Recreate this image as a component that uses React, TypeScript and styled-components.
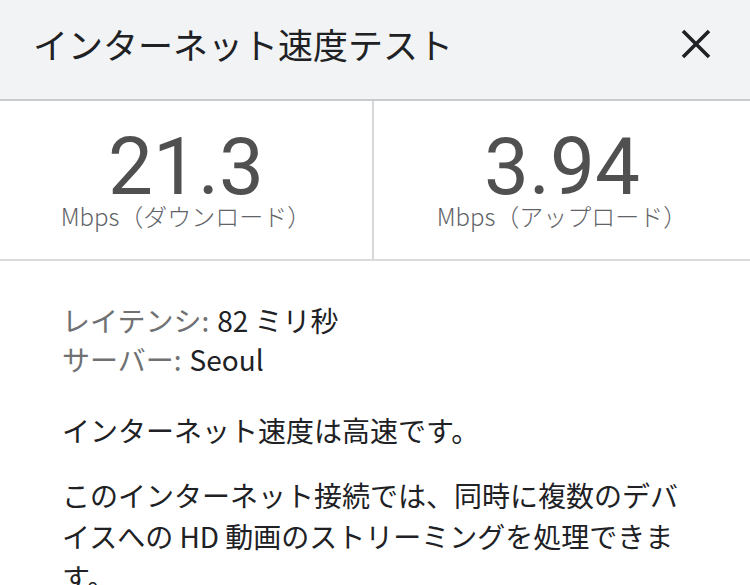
import styled, { createGlobalStyle } from 'styled-components';

const GlobalStyle = createGlobalStyle`
  html, body {
    margin: 0;
    padding: 0;
    background: #ffffff;
  }
  body {
    font-family: 'Noto Sans CJK JP', 'Noto Sans', sans-serif;
    color: #202124;
    width: 750px;
    overflow: hidden;
  }
`;

const Header = styled.header`
  display: flex;
  align-items: center;
  justify-content: space-between;
  height: 101px;
  padding: 0 30px 12px 33px;
  box-sizing: border-box;
  background: #f1f3f4;
  border-bottom: 2px solid #c9cacb;
`;

const Title = styled.h1`
  margin: 0;
  font-size: 35px;
  font-weight: 400;
  color: #202124;
`;

const CloseButton = styled.button`
  display: flex;
  align-items: center;
  justify-content: center;
  width: 48px;
  height: 48px;
  padding: 0;
  border: none;
  background: none;
  cursor: pointer;
`;

const Stats = styled.section`
  display: grid;
  grid-template-columns: 374px 1fr;
  height: 158px;
  border-bottom: 2px solid #dadbdc;
`;

const Stat = styled.div<{ $divider?: boolean }>`
  display: flex;
  flex-direction: column;
  align-items: center;
  justify-content: center;
  border-right: ${(p) => (p.$divider ? '2px solid #d6d7d8' : 'none')};
`;

const Value = styled.div`
  font-family: Roboto, 'Noto Sans', sans-serif;
  font-size: 80px;
  line-height: 70px;
  color: #505050;
`;

const Unit = styled.div`
  margin-top: 2px;
  font-size: 24px;
  line-height: 24px;
  color: #5f6368;
  font-weight: 300;
`;

const Body = styled.main`
  padding: 40px 58px 0 62px;
`;

const InfoList = styled.dl`
  margin: 0 0 31px;
  font-size: 28px;
  line-height: 39px;
`;

const InfoRow = styled.div`
  display: flex;
  gap: 8px;
`;

const InfoLabel = styled.dt`
  color: #6f7173;
`;

const InfoValue = styled.dd`
  margin: 0;
  color: #202124;
`;

const Paragraph = styled.p`
  margin: 0 0 24px;
  font-size: 28px;
  line-height: 41px;
  color: #202124;
`;

const CloseIcon = () => (
  <svg width="30" height="30" viewBox="0 0 30 30">
    <path
      d="M2 2 L28 28 M28 2 L2 28"
      stroke="#202124"
      strokeWidth="3.6"
      fill="none"
    />
  </svg>
);

const App = () => {
  const stats = [
    { value: '21.3', unit: 'Mbps（ダウンロード）' },
    { value: '3.94', unit: 'Mbps（アップロード）' },
  ];
  return (
    <>
      <GlobalStyle />
      <Header>
        <Title>インターネット速度テスト</Title>
        <CloseButton aria-label="閉じる">
          <CloseIcon />
        </CloseButton>
      </Header>
      <Stats>
        {stats.map((s, i) => (
          <Stat key={s.unit} $divider={i === 0}>
            <Value>{s.value}</Value>
            <Unit>{s.unit}</Unit>
          </Stat>
        ))}
      </Stats>
      <Body>
        <InfoList>
          <InfoRow>
            <InfoLabel>レイテンシ:</InfoLabel>
            <InfoValue>82 ミリ秒</InfoValue>
          </InfoRow>
          <InfoRow>
            <InfoLabel>サーバー:</InfoLabel>
            <InfoValue>Seoul</InfoValue>
          </InfoRow>
        </InfoList>
        <Paragraph>インターネット速度は高速です。</Paragraph>
        <Paragraph>
          このインターネット接続では、同時に複数のデバイスへの HD 動画のストリーミングを処理できます。
        </Paragraph>
      </Body>
    </>
  );
};

export default App;
